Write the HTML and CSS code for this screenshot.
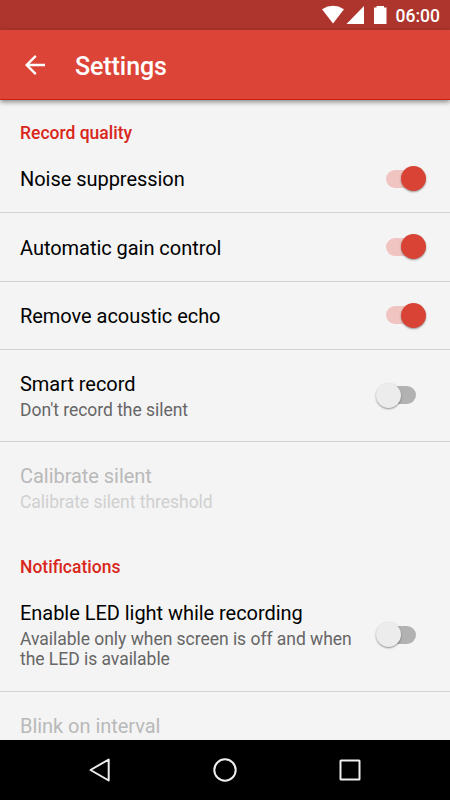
FILE: index.html
```
<!DOCTYPE html>
<html lang="en">
<head>
    <meta charset="utf-8">
    <title>Settings</title>
    <link rel="stylesheet" href="styles.css">
</head>
<body>
    <div class="status-bar">
        <svg width="74" height="20" viewBox="0 0 74 20" fill="#fff">
            <path d="M0 4.200 Q11 -2.600 22 4.200 L11 18.600 Z"/>
            <path d="M42 1 V19 H24.500 Z"/>
            <path d="M54.500 1 H62 V2.500 H64.500 V19 H52 V2.500 H54.500 Z"/>
        </svg>
        <span class="clock">06:00</span>
    </div>

    <header class="toolbar">
        <svg class="back" width="20" height="20" viewBox="0 0 20 20" fill="none" stroke="#fff" stroke-width="2.400">
            <path d="M20 10 H2 M10.800 0.900 L1.700 10 L10.800 19.100"/>
        </svg>
        <h1>Settings</h1>
    </header>

    <main class="settings">
        <h2>Record quality</h2>
        <div class="row">
            <div class="label"><p class="name">Noise suppression</p></div>
            <div class="switch on"></div>
        </div>
        <div class="row">
            <div class="label"><p class="name">Automatic gain control</p></div>
            <div class="switch on"></div>
        </div>
        <div class="row">
            <div class="label"><p class="name">Remove acoustic echo</p></div>
            <div class="switch on"></div>
        </div>
        <div class="row two-line">
            <div class="label">
                <p class="name">Smart record</p>
                <p class="summary">Don't record the silent</p>
            </div>
            <div class="switch"></div>
        </div>
        <div class="row two-line disabled last">
            <div class="label">
                <p class="name">Calibrate silent</p>
                <p class="summary">Calibrate silent threshold</p>
            </div>
        </div>

        <h2>Notifications</h2>
        <div class="row three-line">
            <div class="label">
                <p class="name">Enable LED light while recording</p>
                <p class="summary">Available only when screen is off and when the LED is available</p>
            </div>
            <div class="switch"></div>
        </div>
        <div class="row disabled">
            <div class="label"><p class="name">Blink on interval</p></div>
        </div>
    </main>

    <nav class="nav-bar">
        <svg width="24" height="24" viewBox="0 0 24 24"><path d="M20.700 1.500 V22.500 L2.500 12 Z"/></svg>
        <svg width="24" height="24" viewBox="0 0 24 24"><circle cx="12" cy="12" r="10.700"/></svg>
        <svg width="24" height="24" viewBox="0 0 24 24"><rect x="2.500" y="2.500" width="19" height="19" rx="0.500"/></svg>
    </nav>
</body>
</html>
```

FILE: styles.css
```
* {
    box-sizing: border-box;
}

body {
    font-family: Roboto, sans-serif;
    margin: 0;
    height: 800px;
    display: flex;
    flex-direction: column;
    overflow: hidden;
    background-color: #f4f4f4;
}

h1, h2, p {
    margin: 0;
}

.status-bar {
    flex: none;
    height: 30px;
    padding: 1px 10px 0 0;
    display: flex;
    align-items: center;
    justify-content: flex-end;
    background-color: #ad352d;
    color: #fff;
}

.clock {
    font-size: 17.5px;
    font-weight: 500;
}

.status-bar svg {
    margin-top: -2px;
}

.toolbar {
    flex: none;
    height: 70px;
    padding-left: 25px;
    display: flex;
    align-items: center;
    background-color: #dc4437;
    border-bottom: 1px solid #cf1d12;
    box-shadow: 0 2px 5px rgba(0, 0, 0, 0.45);
    color: #fff;
    z-index: 1;
}

.toolbar h1 {
    margin: 3px 0 0 30px;
    font-size: 25px;
    font-weight: 500;
    letter-spacing: -0.08px;
}

.settings {
    flex: 1;
    min-height: 0;
    overflow: hidden;
}

.settings h2 {
    height: 45px;
    padding: 22px 20px 0;
    font-size: 17.5px;
    line-height: 22px;
    font-weight: 500;
    color: #d9261c;
}

.row {
    height: 68.3px;
    padding: 0 24px 0 20px;
    display: flex;
    align-items: center;
    justify-content: space-between;
    border-bottom: 1px solid #d2d2d2;
}

.two-line {
    height: 92px;
}

.three-line {
    height: 113px;
}

.last {
    border-bottom: none;
}

.label {
    width: 340px;
}

.name {
    font-size: 20px;
    line-height: 26px;
    letter-spacing: -0.04px;
    color: #000;
}

.name:only-child {
    padding-top: 1.5px;
}

.summary {
    padding-top: 3px;
    font-size: 17.5px;
    line-height: 20.5px;
    letter-spacing: -0.03px;
    color: #666;
}

.disabled .name {
    color: #b9b9b9;
}

.disabled .summary {
    color: #d0d0d0;
}

.switch {
    position: relative;
    width: 50px;
    height: 25px;
    display: flex;
    align-items: center;
    justify-content: center;
}

.switch::before {
    content: "";
    width: 30px;
    height: 18px;
    border-radius: 9px;
    background-color: #b2b2b2;
}

.switch::after {
    content: "";
    position: absolute;
    left: 0;
    top: 0;
    width: 25px;
    height: 25px;
    border-radius: 50%;
    background-color: #ececec;
    box-shadow: 0 1px 2px rgba(0, 0, 0, 0.4);
}

.switch.on::before {
    background-color: #f0c5c1;
}

.switch.on::after {
    left: 25px;
    background-color: #d84336;
}

.nav-bar {
    flex: none;
    height: 60px;
    padding: 0 88px;
    display: flex;
    align-items: center;
    justify-content: space-between;
    background-color: #000;
}

.nav-bar svg {
    fill: none;
    stroke: #eee;
    stroke-width: 2;
    stroke-linejoin: round;
}
```
